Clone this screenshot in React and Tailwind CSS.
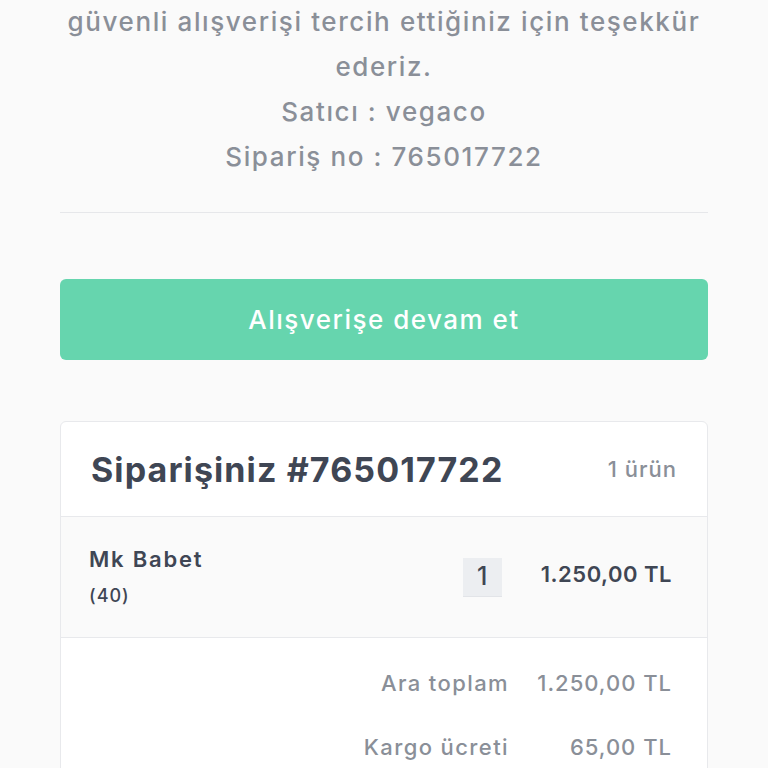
export default function App() {
  return (
    <div className="min-h-screen bg-[#fafafa] text-[#8a8f98]" style={{ fontFamily: 'Inter, "Noto Sans", sans-serif' }}>
      <div className="mx-auto w-[648px]">
        {/* thanks text */}
        <div className="mt-[-1px] text-center text-[26px] leading-[45px] font-medium tracking-[1.6px] text-[#8a8f98]">
          <p>
            güvenli alışverişi tercih ettiğiniz için teşekkür
            <br />
            ederiz.
          </p>
          <p>Satıcı : vegaco</p>
          <p>Sipariş no : 765017722</p>
        </div>

        <div className="mt-[33px] border-t border-[#e6e7ea]" />

        <button className="mt-[66px] flex h-[81px] w-full items-center justify-center rounded-md bg-[#66d5ae] text-[26px] font-medium tracking-[1.5px] text-white">
          Alışverişe devam et
        </button>

        {/* order card */}
        <div className="mt-[61px] overflow-hidden rounded-md border border-[#e8e9ec] bg-white">
          <div className="flex h-[95px] items-center justify-between border-b border-[#e8e9ec] pl-[30px] pr-[30px]">
            <h2 className="text-[34px] font-bold tracking-[1.1px] text-[#3f4654]">Siparişiniz #765017722</h2>
            <span className="text-[22px] font-medium tracking-[1px] text-[#8a8f98]">1 ürün</span>
          </div>

          <div className="flex h-[121px] items-center border-b border-[#e8e9ec] bg-[#fafafa] pl-[28px] pr-[35px] text-[#3f4654]">
            <div className="flex-1 pb-[2px]">
              <div className="text-[22px] leading-[28px] font-semibold tracking-[1.8px]">Mk Babet</div>
              <div className="mt-[11px] text-[18px] leading-[24px] font-medium tracking-[1px]">(40)</div>
            </div>
            <div className="flex h-[39px] w-[39px] items-center justify-center border-b border-[#e2e4e8] bg-[#eceef1] text-[25px] font-medium">
              1
            </div>
            <div className="ml-[39px] pb-[6px] text-[22px] font-semibold tracking-[0.5px]">1.250,00 TL</div>
          </div>

          <div className="flex flex-col items-end gap-[34px] pr-[35px] pt-[30px] pb-[40px] text-[22px] leading-[30px] font-medium tracking-[1px] text-[#8a8f98]">
            <div className="flex items-center">
              <span className="tracking-[1.4px]">Ara toplam</span>
              <span className="w-[163px] text-right">1.250,00 TL</span>
            </div>
            <div className="flex items-center">
              <span className="tracking-[1.4px]">Kargo ücreti</span>
              <span className="w-[163px] text-right">65,00 TL</span>
            </div>
          </div>
        </div>
      </div>
    </div>
  );
}
